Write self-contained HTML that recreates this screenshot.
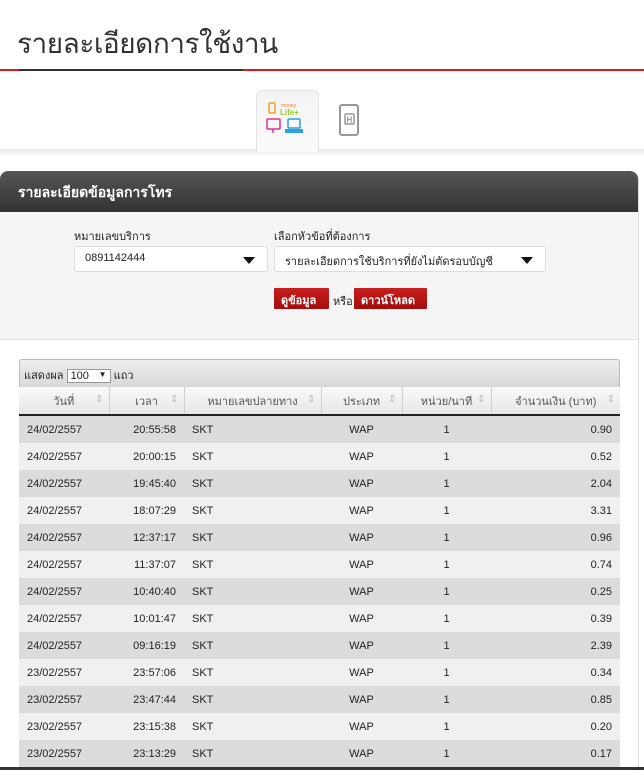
<!DOCTYPE html>
<html><head><meta charset="utf-8"><style>
*{box-sizing:border-box;margin:0;padding:0}
body{width:644px;height:770px;overflow:hidden;background:#fff;font-family:Tahoma,"Liberation Sans","Noto Sans CJK SC",sans-serif;font-size:11px;color:#222;position:relative}
.abs{position:absolute}
h1{position:absolute;left:17px;top:22px;font-weight:300;font-size:28px;color:#333;font-family:"Liberation Sans","Noto Sans CJK SC",sans-serif;letter-spacing:-0.5px}
.panel{position:absolute;left:0;top:171px;width:639px;height:600px;border-radius:8px 8px 0 0;background:#fff;border-right:1px solid #ddd}
.ph{height:41px;background:linear-gradient(#555,#333);border-radius:8px 8px 0 0;color:#fff;font-weight:bold;font-size:14px;padding:11px 0 0 18px}
.form{height:128px;background:#f5f5f5;border-bottom:1px solid #e4e4e4;position:relative}
.lbl{position:absolute;font-size:11px;color:#222;line-height:13px}
.sel{position:absolute;height:26px;background:#fff;border:1px solid #ddd;border-radius:3px;padding:5px 10px;font-size:11px}
.sel:after{content:"";position:absolute;right:12px;top:10px;border:6px solid transparent;border-top:7px solid #111;border-bottom:0}
.btn{position:absolute;background:linear-gradient(#c81e1e,#a50c0c);color:#fff;font-weight:bold;height:21px;padding:3px 7px;font-size:11px;border-radius:1px}
table{position:absolute;left:19px;top:387px;width:601px;border-collapse:collapse;font-size:11px}
th{height:28px;font-weight:normal;color:#555;background:linear-gradient(#fafafa,#e6e6e6);border-right:1px solid #d0d0d0;border-bottom:2px solid #222;text-align:center;position:relative}
th:after{content:"⇕";position:absolute;right:5px;top:7px;color:#bbb;font-size:10px}
td{height:27px;padding:0 8px}
tr:nth-child(odd) td{background:#dcdcdc}
tr:nth-child(even) td{background:#f0f0f0}
</style></head><body>
<h1>รายละเอียดการใช้งาน</h1>
<div class="abs" style="left:0;top:69px;width:644px;height:2px;background:#d71a1a"></div>
<div class="abs" style="left:19px;top:69px;width:224px;height:2px;background:#333"></div>
<div class="abs" style="left:0;top:149px;width:644px;height:8px;background:linear-gradient(#e8e8e8,#fff)"></div>
<div class="abs" style="left:256px;top:90px;width:63px;height:62px;background:linear-gradient(#f4f4f4,#fafafa);border:1px solid #e4e4e4;border-bottom:none;border-radius:6px 6px 0 0"></div>
<svg class="abs" style="left:266px;top:100px" width="44" height="40" viewBox="0 0 44 40">
<rect x="3" y="3" width="6" height="10" rx="1" fill="none" stroke="#f0a020" stroke-width="1.5"/>
<text x="15" y="7" font-size="5" fill="#f08030" font-family="Liberation Sans">money</text>
<text x="14" y="15" font-size="8" font-weight="bold" fill="#9c3" font-family="Liberation Sans">Life+</text>
<rect x="1" y="19" width="13" height="10" rx="1" fill="none" stroke="#e0309a" stroke-width="1.5"/>
<line x1="7" y1="29" x2="7" y2="33" stroke="#e0309a" stroke-width="1.5"/>
<rect x="22" y="19" width="12" height="9" rx="1" fill="none" stroke="#2aa0dc" stroke-width="1.5"/>
<rect x="19" y="29" width="18" height="4" fill="#2aa0dc"/>
</svg>
<svg class="abs" style="left:339px;top:104px" width="22" height="34" viewBox="0 0 22 34">
<rect x="1" y="1" width="18" height="30" rx="2" fill="none" stroke="#999" stroke-width="2"/>
<rect x="6" y="10" width="9" height="10" rx="1" fill="none" stroke="#999" stroke-width="1.5"/>
<text x="7.5" y="18.5" font-size="8" fill="#999" font-family="Liberation Sans" font-weight="bold">H</text>
</svg>
<div class="panel">
<div class="ph">รายละเอียดข้อมูลการโทร</div>
<div class="form">
<div class="lbl" style="left:74px;top:19px">หมายเลขบริการ</div>
<div class="lbl" style="left:274px;top:19px">เลือกหัวข้อที่ต้องการ</div>
<div class="sel" style="left:74px;top:34px;width:194px">0891142444</div>
<div class="sel" style="left:274px;top:34px;width:272px">รายละเอียดการใช้บริการที่ยังไม่ตัดรอบบัญชี</div>
</div>
</div>
<div class="btn" style="left:274px;top:288px;width:55px">ดูข้อมูล</div>
<div class="abs" style="left:333px;top:292px">หรือ</div>
<div class="btn" style="left:354px;top:288px;width:73px">ดาวน์โหลด</div>
<div class="abs" style="left:19px;top:359px;width:601px;height:28px;background:linear-gradient(#eee,#d8d8d8);border:1px solid #bbb;border-bottom:none;border-radius:3px 3px 0 0;padding:6px 4px">แสดงผล <span style="display:inline-block;border:1px solid #999;background:#fff;padding:0 3px;width:44px">100 <span style="float:right;font-size:8px">▼</span></span> แถว</div>
<table>
<tr><th style="width:90px">วันที่</th><th style="width:75px">เวลา</th><th style="width:137px">หมายเลขปลายทาง</th><th style="width:81px">ประเภท</th><th style="width:89px">หน่วย/นาที</th><th style="border-right:none">จำนวนเงิน (บาท)</th></tr>
</table>
<table style="top:416px">
<colgroup><col style="width:90px"><col style="width:75px"><col style="width:137px"><col style="width:81px"><col style="width:89px"><col></colgroup>
<tr><td>24/02/2557</td><td style="text-align:right">20:55:58</td><td>SKT</td><td style="text-align:center">WAP</td><td style="text-align:center">1</td><td style="text-align:right">0.90</td></tr>
<tr><td>24/02/2557</td><td style="text-align:right">20:00:15</td><td>SKT</td><td style="text-align:center">WAP</td><td style="text-align:center">1</td><td style="text-align:right">0.52</td></tr>
<tr><td>24/02/2557</td><td style="text-align:right">19:45:40</td><td>SKT</td><td style="text-align:center">WAP</td><td style="text-align:center">1</td><td style="text-align:right">2.04</td></tr>
<tr><td>24/02/2557</td><td style="text-align:right">18:07:29</td><td>SKT</td><td style="text-align:center">WAP</td><td style="text-align:center">1</td><td style="text-align:right">3.31</td></tr>
<tr><td>24/02/2557</td><td style="text-align:right">12:37:17</td><td>SKT</td><td style="text-align:center">WAP</td><td style="text-align:center">1</td><td style="text-align:right">0.96</td></tr>
<tr><td>24/02/2557</td><td style="text-align:right">11:37:07</td><td>SKT</td><td style="text-align:center">WAP</td><td style="text-align:center">1</td><td style="text-align:right">0.74</td></tr>
<tr><td>24/02/2557</td><td style="text-align:right">10:40:40</td><td>SKT</td><td style="text-align:center">WAP</td><td style="text-align:center">1</td><td style="text-align:right">0.25</td></tr>
<tr><td>24/02/2557</td><td style="text-align:right">10:01:47</td><td>SKT</td><td style="text-align:center">WAP</td><td style="text-align:center">1</td><td style="text-align:right">0.39</td></tr>
<tr><td>24/02/2557</td><td style="text-align:right">09:16:19</td><td>SKT</td><td style="text-align:center">WAP</td><td style="text-align:center">1</td><td style="text-align:right">2.39</td></tr>
<tr><td>23/02/2557</td><td style="text-align:right">23:57:06</td><td>SKT</td><td style="text-align:center">WAP</td><td style="text-align:center">1</td><td style="text-align:right">0.34</td></tr>
<tr><td>23/02/2557</td><td style="text-align:right">23:47:44</td><td>SKT</td><td style="text-align:center">WAP</td><td style="text-align:center">1</td><td style="text-align:right">0.85</td></tr>
<tr><td>23/02/2557</td><td style="text-align:right">23:15:38</td><td>SKT</td><td style="text-align:center">WAP</td><td style="text-align:center">1</td><td style="text-align:right">0.20</td></tr>
<tr><td>23/02/2557</td><td style="text-align:right">23:13:29</td><td>SKT</td><td style="text-align:center">WAP</td><td style="text-align:center">1</td><td style="text-align:right">0.17</td></tr>
</table>
<div class="abs" style="left:0;top:767px;width:644px;height:3px;background:#333"></div>
</body></html>
